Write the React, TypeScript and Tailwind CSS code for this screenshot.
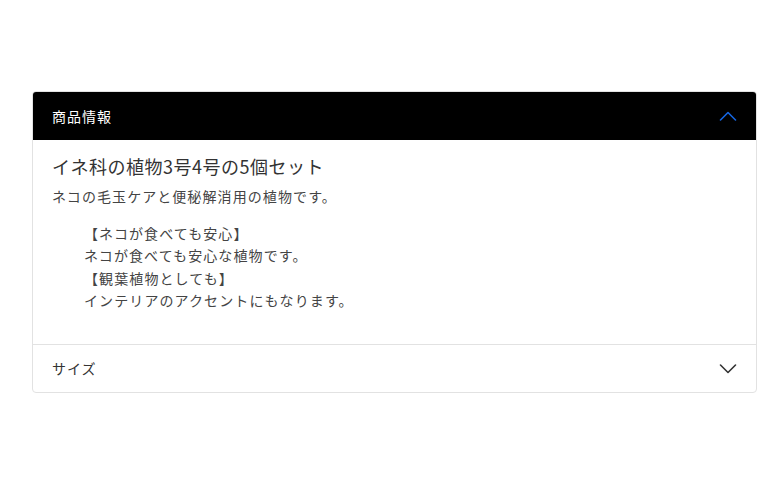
import React from "react";

const font = { fontFamily: '"Noto Sans CJK JP", "Noto Sans", sans-serif' };

function Chevron({ up, color }: { up?: boolean; color: string }) {
  return (
    <svg width="18" height="10" viewBox="0 0 18 10" fill="none">
      <path
        d={up ? "M1.5 9 L9 1.5 L16.5 9" : "M1.5 1 L9 8.5 L16.5 1"}
        stroke={color}
        strokeWidth="1.6"
        strokeLinecap="round"
        strokeLinejoin="round"
      />
    </svg>
  );
}

export default function App() {
  return (
    <div className="min-h-[493px] w-[780px] bg-white pt-[91px]" style={font}>
      <div className="ml-[32px] w-[725px] rounded border border-[#e2e2e2] overflow-hidden">
        <div className="flex h-[48px] items-center justify-between bg-black px-[19px]">
          <span className="text-[14px] tracking-[0.07em] text-white">商品情報</span>
          <Chevron up color="#1565e0" />
        </div>
        <div className="px-[19px] pt-[13px] pb-[33px] text-[#444]">
          <h2 className="text-[18px] leading-[26px] tracking-[0.5px] text-[#333]">イネ科の植物3号4号の5個セット</h2>
          <p className="mt-[6px] text-[14px] leading-[22px] tracking-[1.1px]">
            ネコの毛玉ケアと便秘解消用の植物です。
          </p>
          <div className="mt-[15px] pl-[32px] text-[14px] leading-[22.3px] tracking-[1.1px]">
            <div>【ネコが食べても安心】</div>
            <div>ネコが食べても安心な植物です。</div>
            <div>【観葉植物としても】</div>
            <div>インテリアのアクセントにもなります。</div>
          </div>
        </div>
        <div className="flex h-[48px] items-center justify-between border-t border-[#e2e2e2] px-[19px]">
          <span className="text-[14px] tracking-[0.07em] text-[#333]">サイズ</span>
          <Chevron color="#333" />
        </div>
      </div>
    </div>
  );
}
